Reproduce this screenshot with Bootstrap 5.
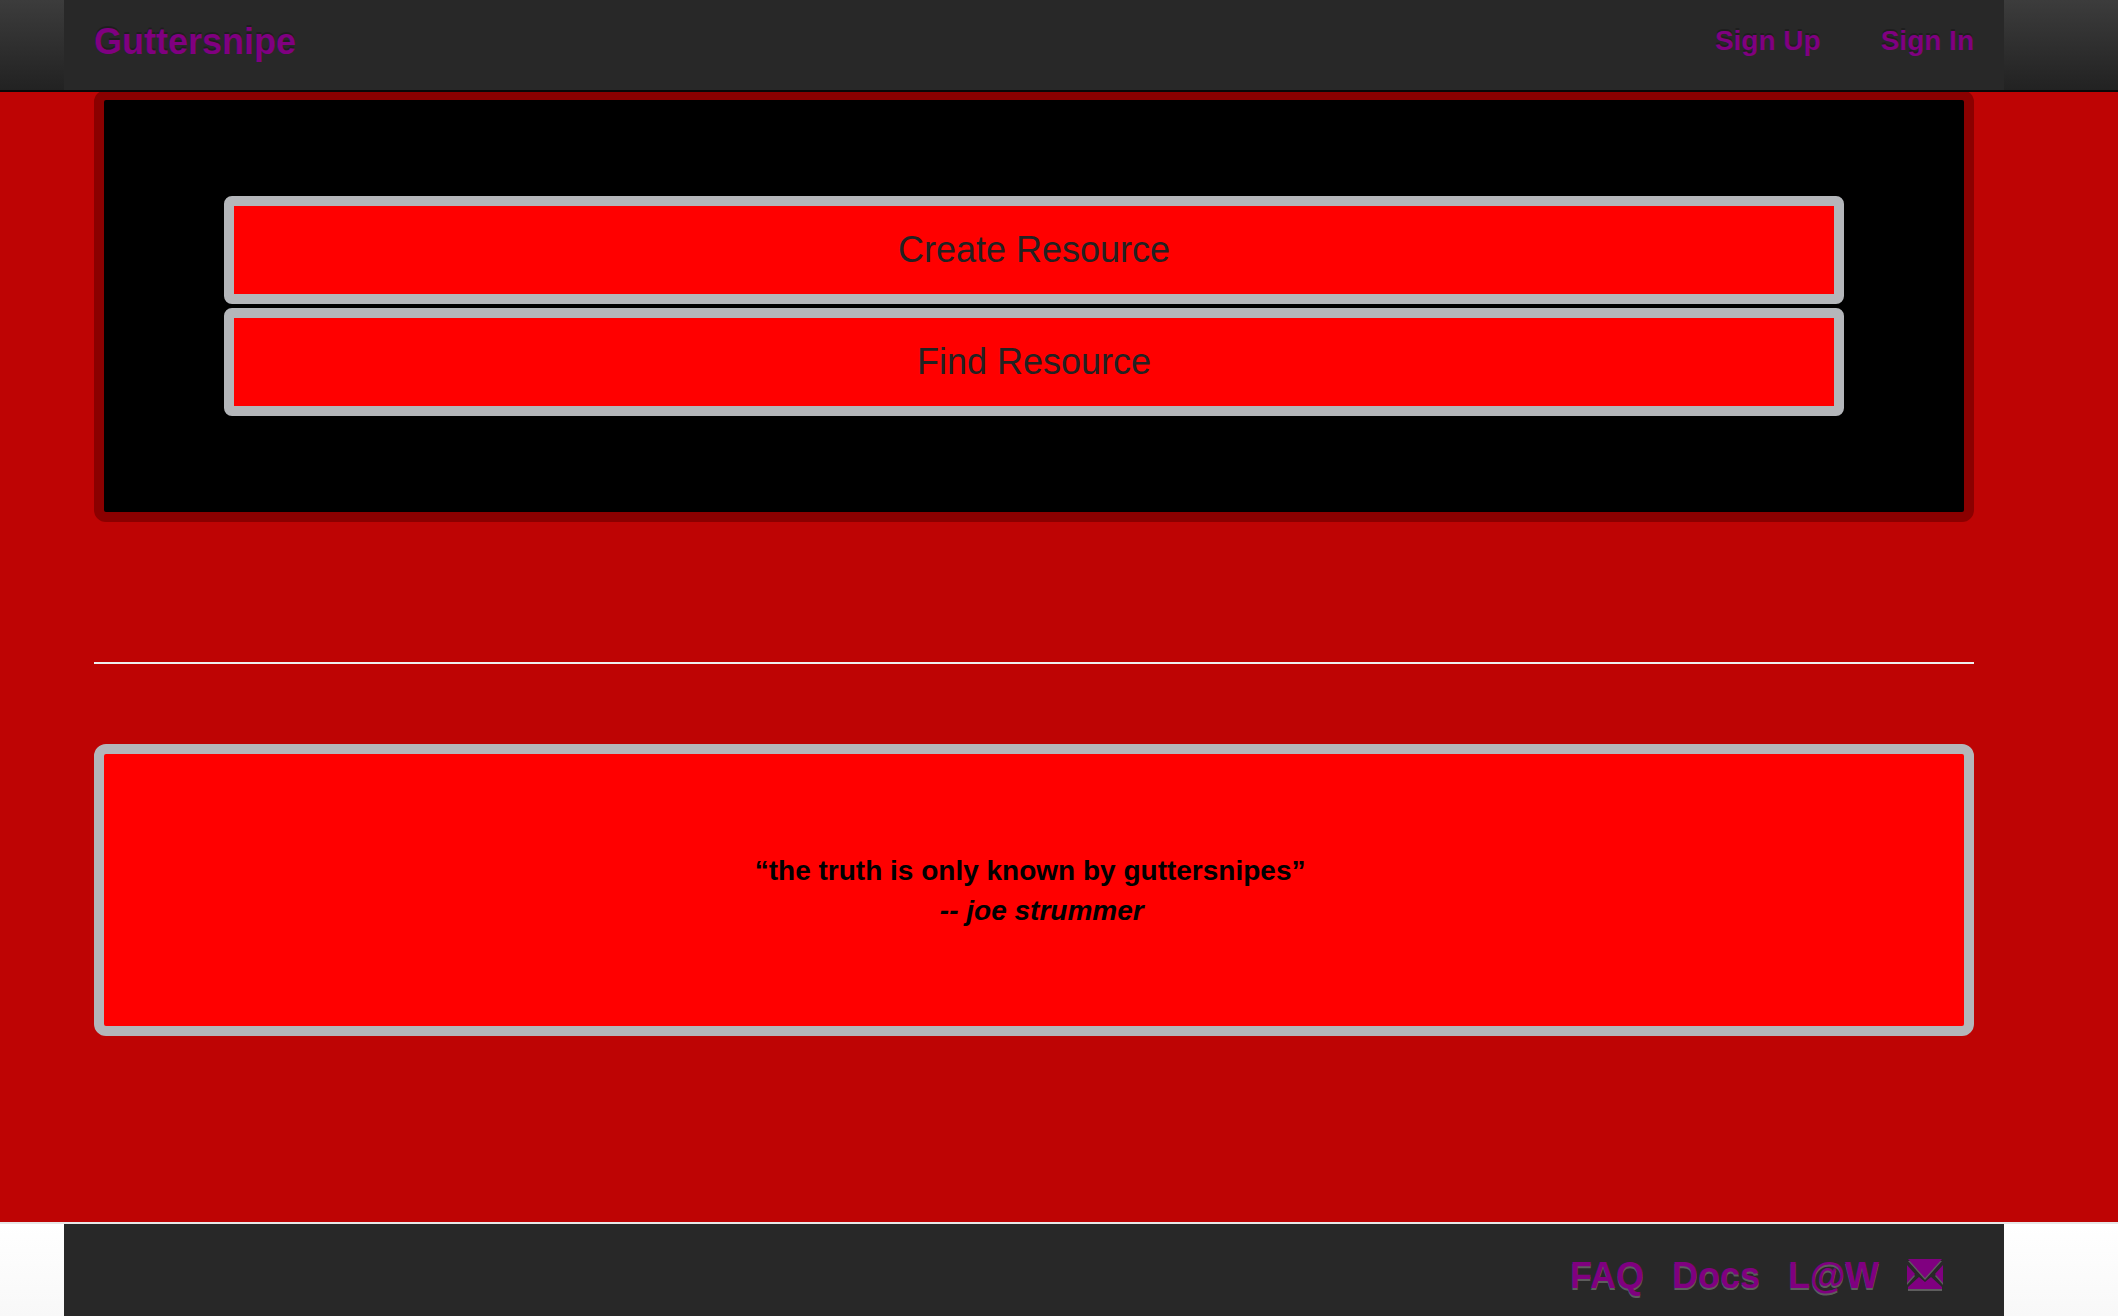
<!DOCTYPE html>
<html lang="en">
<head>
<meta charset="utf-8">
<meta name="viewport" content="width=device-width, initial-scale=1">
<title>Guttersnipe</title>
<link href="https://cdn.jsdelivr.net/npm/bootstrap@5.3.0/dist/css/bootstrap.min.css" rel="stylesheet">
<style>
  body {
    background: #be0404;
    font-family: "Liberation Sans", Arial, sans-serif;
  }
  a { color: purple; text-decoration: none; }
  a:hover { color: #a000a0; }
  .page-gutter { padding-left: 64px; padding-right: 114px; }
  .bar-inner { background: #282828; height: 90px; padding: 0 30px; }
  .top-bar {
    background: linear-gradient(#3c3c3c, #222);
    border-bottom: 2px solid #080808;
    text-shadow: 0 -2px 0 rgba(0, 0, 0, .25);
  }
  .site-name { font-size: 36px; line-height: 42px; color: purple; padding: 0; margin: 0; }
  .top-links { gap: 60px; font-size: 28px; line-height: 40px; }
  .bar-top-space { padding-top: 21px; }
  .page-body { padding: 90px 144px 220px 94px; }
  .choices {
    background: #000;
    border: 10px solid #8b0000;
    border-radius: 12px;
    padding: 96px 120px;
  }
  .choice {
    --bs-btn-color: #222;
    --bs-btn-bg: #f00;
    --bs-btn-border-color: #b4b6ba;
    --bs-btn-hover-color: #222;
    --bs-btn-hover-bg: #e00000;
    --bs-btn-hover-border-color: #b4b6ba;
    --bs-btn-border-width: 10px;
    --bs-btn-border-radius: 8px;
    --bs-btn-padding-y: 20px;
    --bs-btn-font-size: 36px;
    --bs-btn-line-height: 48px;
  }
  .divider { border-top: 2px solid #eee; opacity: 1; margin: 140px 0 80px; }
  .quote-box {
    background: #f00;
    color: #000;
    border: 10px solid #b4b6ba;
    border-radius: 12px;
    padding: 97px 30px 95px;
    font-size: 28px;
    line-height: 40px;
  }
  .bottom-bar {
    background: linear-gradient(#fff, #f8f8f8);
    border-top: 2px solid #e7e7e7;
    text-shadow: 0 2px 0 rgba(255, 255, 255, .25);
  }
  .bottom-bar .bar-inner { height: 92px; }
  .bottom-links { gap: 28px; font-size: 36px; line-height: 40px; padding: 32px 31px 0 0; }
  .mail-icon { margin-top: 3px; filter: drop-shadow(0 2px 0 rgba(255, 255, 255, .25)); }
</style>
<script src="https://cdn.jsdelivr.net/npm/bootstrap@5.3.0/dist/js/bootstrap.bundle.min.js"></script>
</head>
<body>
<nav class="top-bar page-gutter fixed-top" aria-label="Main">
  <div class="bar-inner d-flex justify-content-between align-items-start fw-bold">
    <div class="bar-top-space"><a class="navbar-brand site-name" href="#">Guttersnipe</a></div>
    <div class="bar-top-space d-flex top-links">
      <a href="#signup">Sign Up</a>
      <a href="#signin">Sign In</a>
    </div>
  </div>
</nav>

<main class="page-body">
  <section class="choices d-grid gap-1">
    <button type="button" class="btn choice">Create Resource</button>
    <button type="button" class="btn choice">Find Resource</button>
  </section>
  <hr class="divider">
  <section class="quote-box text-center fw-bold">
    <div>“the truth is only known by guttersnipes”&nbsp;</div>
    <div>&nbsp;&nbsp;<em>-- joe strummer</em></div>
  </section>
</main>

<footer class="bottom-bar page-gutter fixed-bottom">
  <div class="bar-inner">
    <div class="bottom-links d-flex justify-content-end align-items-start fw-bold">
      <a href="#faq">FAQ</a>
      <a href="#docs">Docs</a>
      <a href="#law">L@W</a>
      <a href="#contact" class="d-flex" aria-label="Contact">
        <svg class="mail-icon" width="36" height="30" viewBox="0 0 36 30" fill="currentColor" aria-hidden="true">
          <path d="M1 0H35L18 19Z"/>
          <path d="M0 6L8 15L0 24Z"/>
          <path d="M36 6L28 15L36 24Z"/>
          <path d="M1 30V28L12 18L18 23L24 18L35 28V30Z"/>
        </svg>
      </a>
    </div>
  </div>
</footer>
</body>
</html>
